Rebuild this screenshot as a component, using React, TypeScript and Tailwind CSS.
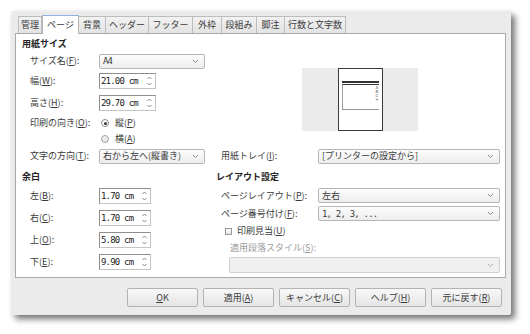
import React from "react";

const U = ({ c }: { c: string }) => <span className="underline underline-offset-1">{c}</span>;

const Chevron = ({ color = "#8a8a8a" }: { color?: string }) => (
  <svg width="7" height="5" viewBox="0 0 7 5" className="shrink-0">
    <polyline points="1,1 3.5,3.5 6,1" fill="none" stroke={color} strokeWidth="1" />
  </svg>
);

const Up = () => (
  <svg width="5" height="4" viewBox="0 0 5 4">
    <polyline points="0.5,3 2.5,1 4.5,3" fill="none" stroke="#7a7a7a" strokeWidth="0.9" />
  </svg>
);
const Down = () => (
  <svg width="5" height="4" viewBox="0 0 5 4">
    <polyline points="0.5,1 2.5,3 4.5,1" fill="none" stroke="#7a7a7a" strokeWidth="0.9" />
  </svg>
);

const mono = "font-['DejaVu_Sans_Mono',monospace] tracking-[-0.8px] text-[9px]";

function Combo({ className, children, disabled }: { className: string; children?: React.ReactNode; disabled?: boolean }) {
  return (
    <div
      className={`flex items-center justify-between rounded-[2px] border pl-[3px] pr-[5px] ${
        disabled ? "border-[#cfcfcf] bg-[#f0f0f0]" : "border-[#b6b6b6] bg-gradient-to-b from-[#fdfdfd] to-[#ededed]"
      } ${className}`}
    >
      <span className="whitespace-nowrap leading-[12px]">{children}</span>
      <Chevron color={disabled ? "#b0b0b0" : "#8a8a8a"} />
    </div>
  );
}

function Spin({ value, className }: { value: string; className: string }) {
  return (
    <div className={`flex h-[16px] items-center border border-t-[#8f8f8f] border-l-[#8f8f8f] border-r-[#c4c4c4] border-b-[#c4c4c4] bg-white ${className}`}>
      <span className={`flex-1 whitespace-nowrap pl-[1px] leading-[12px] text-[#222] ${mono}`}>{value}</span>
      <div className="mr-[3px] flex w-[6px] flex-col items-center gap-[2px]">
        <Up />
        <Down />
      </div>
    </div>
  );
}

function Tab({ label, w, active }: { label: string; w: string; active?: boolean }) {
  if (active)
    return (
      <div className={`relative z-10 -mb-px flex h-[19px] items-center justify-center border-x border-t border-x-[#b5b5b5] border-t-[#8fb3e0] bg-white ${w}`}>
        {label}
      </div>
    );
  return (
    <div className={`flex h-[17px] items-center justify-center border-r border-t border-[#bcbcbc] bg-gradient-to-b from-[#f2f2f2] to-[#e3e3e3] ${w}`}>
      {label}
    </div>
  );
}

function Button({ children }: { children: React.ReactNode }) {
  return (
    <div className="flex h-[19px] w-[71px] items-center justify-center rounded-[2px] border border-[#b3b3b3] bg-gradient-to-b from-[#f8f8f8] to-[#e5e5e5] text-[#3a3a3a]">
      {children}
    </div>
  );
}

export default function App() {
  return (
    <div className="h-[334px] w-[530px] overflow-hidden bg-white pl-[11px] pt-[11px] font-['Noto_Sans_CJK_JP',sans-serif] text-[9px] leading-[12px] text-[#3a3a3a]">
      <div className="flex h-[304px] w-[500px] flex-col rounded-[2px] bg-[#ebebeb] pl-[4px] pr-[5px] pt-[4px] shadow-[4px_4px_6px_rgba(0,0,0,0.55)]">
        {/* Tabs */}
        <div className="flex h-[18px] items-end pl-[3px]">
          <div className="flex h-[17px] w-[24px] items-center justify-center border-x border-t border-[#bcbcbc] bg-gradient-to-b from-[#f2f2f2] to-[#e3e3e3]">
            管理
          </div>
          <Tab label="ページ" w="w-[37px]" active />
          <Tab label="背景" w="w-[27px]" />
          <Tab label="ヘッダー" w="w-[43px]" />
          <Tab label="フッター" w="w-[44px]" />
          <Tab label="外枠" w="w-[29px]" />
          <Tab label="段組み" w="w-[35px]" />
          <Tab label="脚注" w="w-[28px]" />
          <Tab label="行数と文字数" w="w-[61px]" />
        </div>

        {/* Panel */}
        <div className="h-[245px] border border-[#a9a9a9] bg-white">
          {/* Section A */}
          <div className="flex">
            <div className="w-[200px] pl-[6px]">
              <div className="mt-[3px] h-[14px] font-bold leading-[14px] text-[#222]">用紙サイズ</div>
              <div className="mt-[3px] flex h-[14px] items-center pl-[8px]">
                <div className="w-[69px]">
                  サイズ名(<U c="F" />):
                </div>
                <Combo className="h-[15px] w-[106px]">
                  <span className={mono}>A4</span>
                </Combo>
              </div>
              <div className="mt-[5px] flex h-[16px] items-center pl-[8px]">
                <div className="w-[69px]">
                  幅(<U c="W" />):
                </div>
                <Spin value="21.00 cm" className="w-[57px]" />
              </div>
              <div className="mt-[6px] flex h-[16px] items-center pl-[8px]">
                <div className="w-[69px]">
                  高さ(<U c="H" />):
                </div>
                <Spin value="29.70 cm" className="w-[57px]" />
              </div>
              <div className="mt-[5px] flex h-[14px] items-center pl-[8px]">
                <div className="w-[71px]">
                  印刷の向き(<U c="O" />):
                </div>
                <div className="flex h-[8px] w-[8px] items-center justify-center rounded-full border border-[#8c8c8c] bg-white">
                  <div className="h-[3px] w-[3px] rounded-full bg-[#333]" />
                </div>
                <span className="ml-[6px]">
                  縦(<U c="P" />)
                </span>
              </div>
              <div className="mt-[2px] flex h-[14px] items-center pl-[8px]">
                <div className="w-[71px]" />
                <div className="h-[8px] w-[8px] rounded-full border border-[#a0a0a0] bg-gradient-to-b from-[#f4f4f4] to-[#e2e2e2]" />
                <span className="ml-[6px]">
                  横(<U c="A" />)
                </span>
              </div>
            </div>
            <div className="flex-1 pl-[86px] pt-[34px]">
              <div className="flex h-[63px] w-[116px] justify-center bg-[#ebebeb]">
                <div className="flex h-full w-[45px] flex-col border border-[#3a3a3a] bg-white px-[3px] pt-[12px]">
                  <div className="h-[2px] bg-[#333]" />
                  <div className="mt-[1px] flex h-[26px] justify-end border-b border-l border-t border-b-[#9a9a9a] border-l-[#9a9a9a] border-t-[#333] pt-[1px]">
                    <div className="flex flex-col items-center font-['DejaVu_Sans',sans-serif] text-[4px] leading-[4px] text-[#555]">
                      <span>A</span>
                      <span>B</span>
                      <span>C</span>
                      <span>+</span>
                    </div>
                  </div>
                </div>
              </div>
            </div>
          </div>

          {/* Section B */}
          <div className="mt-[3px] flex h-[14px] items-center">
            <div className="flex w-[200px] items-center pl-[14px]">
              <div className="w-[69px]">
                文字の方向(<U c="T" />):
              </div>
              <Combo className="h-[15px] w-[106px]">右から左へ(縦書き)</Combo>
            </div>
            <div className="flex flex-1 items-center pl-[5px]">
              <div className="w-[97px]">
                用紙トレイ(<U c="I" />):
              </div>
              <Combo className="h-[15px] w-[182px]">[プリンターの設定から]</Combo>
            </div>
          </div>

          {/* Section C */}
          <div className="mt-[7px] flex">
            <div className="w-[200px] pl-[6px]">
              <div className="h-[14px] font-bold leading-[14px] text-[#222]">余白</div>
              {[
                ["左", "B", "1.70 cm", "mt-[4px]"],
                ["右", "C", "1.70 cm", "mt-[6px]"],
                ["上", "O", "5.80 cm", "mt-[6px]"],
                ["下", "E", "9.90 cm", "mt-[6px]"],
              ].map(([l, k, v, m]) => (
                <div key={l} className={`flex h-[16px] items-center pl-[8px] ${m}`}>
                  <div className="w-[69px]">
                    {l}(<U c={k} />):
                  </div>
                  <Spin value={v} className="w-[52px]" />
                </div>
              ))}
            </div>
            <div className="flex-1">
              <div className="h-[14px] font-bold leading-[14px] text-[#222]">レイアウト設定</div>
              <div className="mt-[4px] flex h-[15px] items-center pl-[5px]">
                <div className="w-[97px]">
                  ページレイアウト(<U c="P" />):
                </div>
                <Combo className="h-[15px] w-[182px]">左右</Combo>
              </div>
              <div className="mt-[3px] flex h-[15px] items-center pl-[5px]">
                <div className="w-[97px]">
                  ページ番号付け(<U c="F" />):
                </div>
                <Combo className="h-[15px] w-[182px]">
                  <span className={mono}>1, 2, 3, ...</span>
                </Combo>
              </div>
              <div className="mt-[3px] flex h-[14px] items-center pl-[9px]">
                <div className="h-[7px] w-[7px] border border-[#9a9a9a] bg-gradient-to-b from-[#fafafa] to-[#e6e6e6]" />
                <span className="ml-[5px]">
                  印刷見当(<U c="U" />)
                </span>
              </div>
              <div className="mt-[3px] flex h-[14px] items-center pl-[14px] text-[#9a9a9a]">
                適用段落スタイル(<U c="S" />):
              </div>
              <div className="mt-[2px] pl-[13px]">
                <Combo className="h-[16px] w-[271px]" disabled />
              </div>
            </div>
          </div>
        </div>

        {/* Buttons */}
        <div className="mt-[10px] flex justify-end gap-[5px] pr-[4px]">
          <Button>
            <U c="O" />K
          </Button>
          <Button>
            適用(<U c="A" />)
          </Button>
          <Button>
            キャンセル(<U c="C" />)
          </Button>
          <Button>
            ヘルプ(<U c="H" />)
          </Button>
          <Button>
            元に戻す(<U c="R" />)
          </Button>
        </div>
      </div>
    </div>
  );
}
